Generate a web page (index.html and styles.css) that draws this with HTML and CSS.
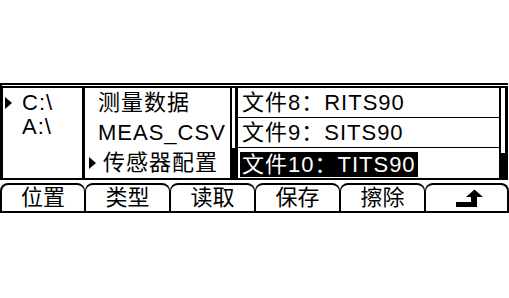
FILE: index.html
```html
<!DOCTYPE html>
<html lang="zh">
<head>
<meta charset="utf-8">
<link rel="stylesheet" href="styles.css">
</head>
<body>
<div class="screen">
  <div class="panel">
    <div class="drives">
      <div class="drive sel"><span class="tri"></span>C:\</div>
      <div class="drive">A:\</div>
    </div>
    <div class="folders">
      <div class="frow">测量数据</div>
      <div class="frow">MEAS_CSV</div>
      <div class="frow sel"><span class="tri"></span>传感器配置</div>
    </div>
    <div class="scroll mid"><div class="track"></div><div class="thumb"></div></div>
    <div class="files">
      <div class="file"><span class="name">文件8：RITS90</span></div>
      <div class="file"><span class="name">文件9：SITS90</span></div>
      <div class="file last"><span class="name hl">文件10：TITS90</span></div>
    </div>
    <div class="scroll right"><div class="track"></div><div class="thumb"></div></div>
  </div>
  <div class="tabs">
    <div class="tab">位置</div>
    <div class="tab">类型</div>
    <div class="tab">读取</div>
    <div class="tab">保存</div>
    <div class="tab">擦除</div>
    <div class="tab back">
      <svg width="28" height="19" viewBox="0 0 28 19">
        <polygon points="11,8 19.5,0.5 28,8" fill="#000"/>
        <rect x="16" y="7" width="6" height="11" fill="#000"/>
        <rect x="1" y="13" width="21" height="5" fill="#000"/>
      </svg>
    </div>
  </div>
</div>
</body>
</html>
```

FILE: styles.css
```css
html, body {
  margin: 0;
  padding: 0;
  background: #fff;
}
body {
  width: 509px;
  height: 298px;
  overflow: hidden;
  font-family: "Liberation Sans", "Noto Sans CJK SC", sans-serif;
  font-size: 22px;
  color: #000;
}
.screen {
  margin-top: 83px;
  width: 509px;
}
.panel {
  box-sizing: border-box;
  width: 508px;
  height: 97px;
  display: flex;
  border-top: 5px double #000;
  border-left: 3px solid #000;
  border-bottom: 2px solid #000;
  letter-spacing: 1px;
}
.drives {
  width: 79px;
  border-right: 3px solid #000;
  padding-top: 3px;
  box-sizing: content-box;
}
.drive {
  height: 24px;
  line-height: 24px;
  padding-left: 19px;
  white-space: nowrap;
  display: flex;
  align-items: center;
}
.drive.sel {
  padding-left: 2px;
}
.tri {
  display: inline-block;
  width: 0;
  height: 0;
  border-left: 7px solid #000;
  border-top: 6px solid transparent;
  border-bottom: 6px solid transparent;
}
.drive .tri {
  margin-right: 10px;
}
.folders {
  width: 145px;
}
.frow {
  height: 30px;
  line-height: 30px;
  padding-left: 13px;
  white-space: nowrap;
  display: flex;
  align-items: center;
}
.frow.sel {
  padding-left: 4px;
}
.frow .tri {
  margin-right: 7px;
}
.scroll {
  display: flex;
  flex-direction: column;
}
.scroll .track {
  flex: 1;
  border-left: 2px solid #000;
  border-right: 3px solid #000;
}
.scroll .thumb {
  background: #000;
}
.scroll.mid {
  width: 8px;
}
.scroll.mid .thumb {
  height: 30px;
}
.scroll.right {
  width: 9px;
}
.scroll.right .thumb {
  height: 25px;
}
.files {
  width: 261px;
}
.file {
  box-sizing: border-box;
  height: 30px;
  border-bottom: 1px solid #000;
  padding-left: 2px;
  display: flex;
  align-items: center;
  white-space: nowrap;
}
.file.last {
  border-bottom: none;
  align-items: flex-end;
  padding-bottom: 1px;
}
.name {
  display: inline-block;
  padding: 0 2px;
  line-height: 25px;
  height: 25px;
}
.name.hl {
  background: #000;
  color: #fff;
}
.tabs {
  margin-top: 3px;
  box-sizing: border-box;
  height: 30px;
  display: flex;
  border-bottom: 2px solid #000;
}
.tab {
  box-sizing: border-box;
  width: 85px;
  height: 28px;
  border-top: 2px solid #000;
  border-left: 1px solid #000;
  border-right: 1px solid #000;
  border-radius: 8px 8px 0 0;
  display: flex;
  align-items: center;
  justify-content: center;
  line-height: 26px;
}
.tab:first-child {
  border-left-width: 2px;
}
.tab.back {
  width: 84px;
  border-right-width: 2px;
}
.tab.back svg {
  display: block;
  margin-left: 4px;
}
```
